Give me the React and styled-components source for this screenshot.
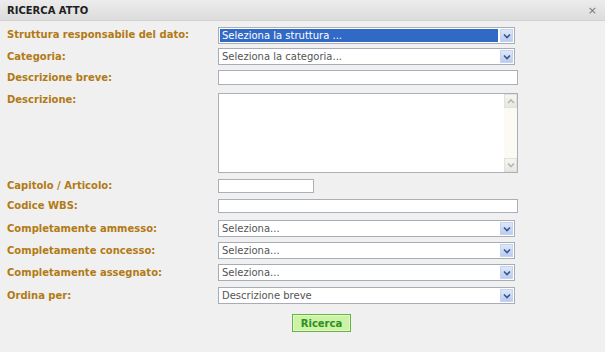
import styled, { createGlobalStyle } from 'styled-components'

const GlobalStyle = createGlobalStyle`
    html, body {
        margin: 0;
        padding: 0;
        background: #f0f0f0;
    }
    body {
        font-family: 'DejaVu Sans', Verdana, sans-serif;
    }
`

const Dialog = styled.div`
    width: 605px;
    height: 352px;
    background: #f0f0f0;
    display: flex;
    flex-direction: column;
`

const TitleBar = styled.div`
    height: 20px;
    padding: 0 7px;
    display: flex;
    align-items: center;
    justify-content: space-between;
    background: linear-gradient(#ececec, #dcdcdc);
    border-bottom: 1px solid #d2d2d2;
`

const Title = styled.h1`
    margin: 0;
    font-size: 10px;
    font-weight: bold;
    color: #1e1e1e;
`

const Close = styled.span`
    font-size: 11px;
    color: #777;
    margin-right: 1px;
`

const Form = styled.div`
    padding: 6px 0 0 7px;
    display: flex;
    flex-direction: column;
`

const Row = styled.div`
    display: grid;
    grid-template-columns: 211px 1fr;
    align-items: start;
    height: ${(props) => props.$h}px;
`

const Label = styled.label`
    font-size: 10px;
    font-weight: bold;
    color: #b27a14;
    line-height: ${(props) => props.$lh || 16}px;
    white-space: nowrap;
`

const SelectBox = styled.div`
    width: ${(props) => props.$w || 297}px;
    height: 17px;
    box-sizing: border-box;
    border: 1px solid #a6adb6;
    background: #fff;
    display: flex;
    align-items: stretch;
    padding: 1px;
`

const SelectValue = styled.div`
    flex: 1;
    font-size: 10px;
    line-height: 13px;
    padding-left: 2px;
    color: ${(props) => (props.$focus ? '#fff' : '#555')};
    background: ${(props) => (props.$focus ? '#3169c6' : 'transparent')};
    margin-right: 2px;
    white-space: nowrap;
    overflow: hidden;
`

const ArrowButton = styled.div`
    width: 13px;
    background: linear-gradient(#dde7f9, #b9ccf0);
    border: 1px solid #c4d3f0;
    box-sizing: border-box;
    display: flex;
    align-items: center;
    justify-content: center;
`

const TextInput = styled.div`
    width: ${(props) => props.$w || 300}px;
    height: ${(props) => props.$h || 15}px;
    box-sizing: border-box;
    border: 1px solid #a9b0b8;
    background: #fff;
`

const TextArea = styled.div`
    width: 300px;
    height: 80px;
    box-sizing: border-box;
    border: 1px solid #a9b0b8;
    background: #fff;
    display: flex;
    justify-content: flex-end;
`

const Scrollbar = styled.div`
    width: 13px;
    background: #fbfbf3;
    display: flex;
    flex-direction: column;
    justify-content: space-between;
`

const ScrollButton = styled.div`
    height: 14px;
    background: linear-gradient(#f6f6f0, #e8e8e2);
    border: 1px solid #e2e2dc;
    box-sizing: border-box;
    display: flex;
    align-items: center;
    justify-content: center;
`

const ButtonRow = styled.div`
    display: flex;
    justify-content: center;
    padding-left: 31px;
`

const SearchButton = styled.button`
    width: 59px;
    height: 18px;
    padding: 0;
    font-family: inherit;
    font-size: 10px;
    font-weight: bold;
    color: #2b8f22;
    background: #ccf2a6;
    border: 1px solid #63b53f;
    box-shadow: inset 0 0 0 1px #e4f8cf;
`

const Chevron = ({ color = '#3d5687', up = false }) => (
    <svg width="8" height="6" viewBox="0 0 8 6">
        <path
            d={up ? 'M1 5 L4 2 L7 5' : 'M1 1.5 L4 4.5 L7 1.5'}
            fill="none"
            stroke={color}
            strokeWidth="1.6"
        />
    </svg>
)

const Select = ({ value, focus }) => (
    <SelectBox>
        <SelectValue $focus={focus}>{value}</SelectValue>
        <ArrowButton>
            <Chevron />
        </ArrowButton>
    </SelectBox>
)

const App = () => {
    return (
        <>
            <GlobalStyle />
            <Dialog>
                <TitleBar>
                    <Title>RICERCA ATTO</Title>
                    <Close>×</Close>
                </TitleBar>
                <Form>
                    <Row $h={21}>
                        <Label>Struttura responsabile del dato:</Label>
                        <Select value="Seleziona la struttura ..." focus />
                    </Row>
                    <Row $h={22}>
                        <Label $lh={17}>Categoria:</Label>
                        <Select value="Seleziona la categoria..." />
                    </Row>
                    <Row $h={23}>
                        <Label $lh={15}>Descrizione breve:</Label>
                        <TextInput />
                    </Row>
                    <Row $h={86}>
                        <Label $lh={14}>Descrizione:</Label>
                        <TextArea>
                            <Scrollbar>
                                <ScrollButton>
                                    <Chevron up color="#b8b8b0" />
                                </ScrollButton>
                                <ScrollButton>
                                    <Chevron color="#b8b8b0" />
                                </ScrollButton>
                            </Scrollbar>
                        </TextArea>
                    </Row>
                    <Row $h={20}>
                        <Label $lh={14}>Capitolo / Articolo:</Label>
                        <TextInput $w={96} $h={14} />
                    </Row>
                    <Row $h={21}>
                        <Label $lh={14}>Codice WBS:</Label>
                        <TextInput $h={14} />
                    </Row>
                    <Row $h={22}>
                        <Label $lh={17}>Completamente ammesso:</Label>
                        <Select value="Seleziona..." />
                    </Row>
                    <Row $h={22}>
                        <Label $lh={17}>Completamente concesso:</Label>
                        <Select value="Seleziona..." />
                    </Row>
                    <Row $h={23}>
                        <Label $lh={17}>Completamente assegnato:</Label>
                        <Select value="Seleziona..." />
                    </Row>
                    <Row $h={27}>
                        <Label $lh={17}>Ordina per:</Label>
                        <Select value="Descrizione breve" />
                    </Row>
                    <ButtonRow>
                        <SearchButton>Ricerca</SearchButton>
                    </ButtonRow>
                </Form>
            </Dialog>
        </>
    )
}

export default App
